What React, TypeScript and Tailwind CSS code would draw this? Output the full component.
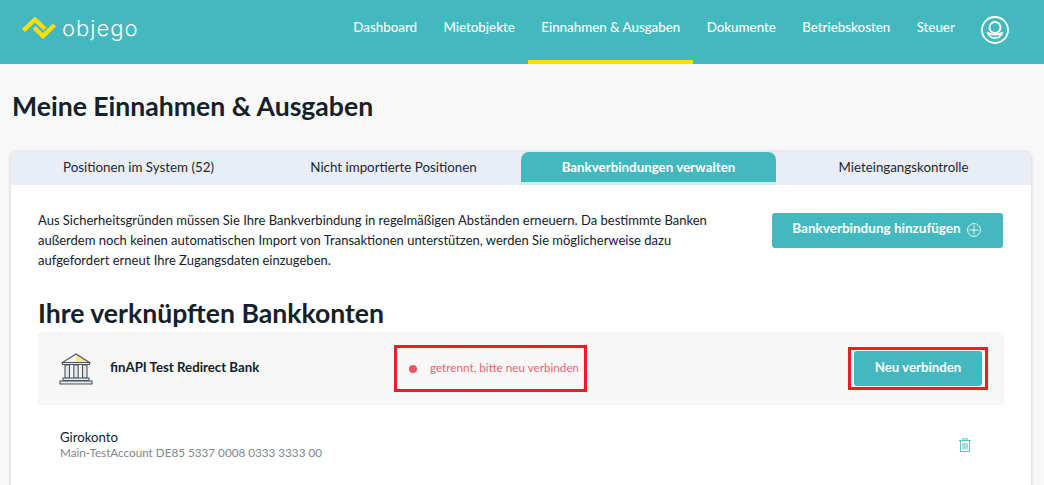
const navItems = ['Dashboard', 'Mietobjekte', 'Einnahmen & Ausgaben', 'Dokumente', 'Betriebskosten', 'Steuer'];
const tabs = ['Positionen im System (52)', 'Nicht importierte Positionen', 'Bankverbindungen verwalten', 'Mieteingangskontrolle'];

function Logo() {
  return (
    <svg width="34" height="22" viewBox="0 0 34 22" fill="none" stroke="#ffe000" strokeWidth="4.4" strokeLinejoin="miter">
      <path d="M1.5 13.5 L13 2.5 L23 12" />
      <path d="M12 10.5 L21 19 L32.5 8" />
    </svg>
  );
}

function Avatar() {
  return (
    <svg width="28" height="28" viewBox="0 0 28 28" fill="none" stroke="#fff" strokeWidth="1.8">
      <circle cx="14" cy="14" r="13" />
      <circle cx="14" cy="11.5" r="5.5" />
      <path d="M6.5 16.5c1.5 3.7 4 5.5 7.5 5.5s6-1.8 7.5-5.5c-1.7 1.4-4 2.2-7.5 2.2s-5.8-.8-7.5-2.2z" />
    </svg>
  );
}

function PlusCircle() {
  return (
    <svg width="14" height="14" viewBox="0 0 14 14" fill="none" stroke="#fff" strokeWidth="0.9" className="mt-[3px]">
      <circle cx="7" cy="7" r="6.4" />
      <path d="M7 2.5 V11.5 M2.5 7 H11.5" />
    </svg>
  );
}

function BankIcon() {
  return (
    <svg width="34" height="32" viewBox="0 0 34 32" fill="none" stroke="#4b5563" strokeWidth="1.1">
      <path d="M17 1 L30 9 H17 Z" fill="#fde68a" stroke="none" />
      <path d="M3.5 9.5 L17 1 L30.5 9.5 Z" />
      <path d="M3.5 9.5 H30.5 V11.5 H3.5 Z" fill="#e5e7eb" />
      <path d="M6 12 H10.5 V25 H6 Z M14.8 12 H19.2 V25 H14.8 Z M23.5 12 H28 V25 H23.5 Z" fill="#e5e7eb" />
      <path d="M4 25 H30 V27.5 H4 Z" fill="#e5e7eb" />
      <path d="M1 28 H33 V31 H1 Z" fill="#e5e7eb" />
    </svg>
  );
}

function TrashIcon() {
  return (
    <svg width="12" height="14" viewBox="0 0 12 14" fill="none" stroke="#5fc4c9" strokeWidth="1.1">
      <path d="M0 2.5 H12" />
      <path d="M4 2.5 V.8 H8 V2.5" />
      <path d="M1.5 2.5 V13.5 H10.5 V2.5" />
      <path d="M4 5 V11.5 M6 5 V11.5 M8 5 V11.5" />
    </svg>
  );
}

export default function App() {
  return (
    <div className="h-[485px] overflow-hidden bg-[#f8f8f8] font-['Lato','Noto_Sans',sans-serif] text-[#14202b]">
      {/* header */}
      <header className="flex h-16 items-stretch bg-[#43b9bf] pl-[22px] pr-[35px]">
        <div className="flex items-center gap-[6px] pb-[8px]">
          <Logo />
          <span className="font-['Inter',sans-serif] text-[22px] font-light leading-none tracking-[1px] text-white">objego</span>
        </div>
        <nav className="ml-auto flex items-stretch">
          {navItems.map((item) => (
            <div
              key={item}
              className={`flex items-center border-b-4 px-[13.2px] pb-[4px] text-[13.33px] font-medium text-white ${
                item === 'Einnahmen & Ausgaben' ? 'border-[#ffe000]' : 'border-transparent'
              }`}
            >
              {item}
            </div>
          ))}
        </nav>
        <div className="ml-[13px] flex items-center pb-[5px]">
          <Avatar />
        </div>
      </header>

      <main className="pl-[11px] pr-[13px]">
        <h1 className="pl-px pt-[26px] text-[26.6px] font-bold leading-[32px] text-[#14202b]">Meine Einnahmen &amp; Ausgaben</h1>

        {/* card */}
        <section className="mt-[30px] rounded-t-md bg-white shadow-[0_0_4px_rgba(0,0,0,0.18)]">
          <div className="grid h-[33px] grid-cols-4 rounded-t-md bg-[#e9edf5]">
            {tabs.map((tab) =>
              tab === 'Bankverbindungen verwalten' ? (
                <div key={tab} className="flex h-[33px] items-center justify-center rounded-t-lg border-b-[3px] border-[#cdeced] bg-[#43b9bf] pt-[1px] text-[13.33px] font-bold text-white">
                  {tab}
                </div>
              ) : (
                <div key={tab} className="flex items-center justify-center pb-[1px] text-[13.33px] text-[#1d2733]">
                  {tab}
                </div>
              ),
            )}
          </div>

          <div className="pl-[27px] pr-[27px]">
            <div className="flex items-start justify-between pt-[25px]">
              <p className="w-[700px] text-[13px] leading-[20px] text-[#14202b]">
                Aus Sicherheitsgründen müssen Sie Ihre Bankverbindung in regelmäßigen Abständen erneuern. Da bestimmte Banken außerdem noch keinen automatischen Import von Transaktionen unterstützen, werden Sie möglicherweise dazu aufgefordert erneut Ihre Zugangsdaten einzugeben.
              </p>
              <button className="mr-px mt-[3px] flex h-[35px] w-[231px] items-center justify-center gap-[6px] rounded-[3px] bg-[#43b9bf] pb-[4px] pr-[2px] text-[13.5px] font-bold text-white">
                Bankverbindung hinzufügen
                <PlusCircle />
              </button>
            </div>

            <h2 className="mt-[27px] text-[26.6px] font-bold leading-[32px] text-[#14202b]">Ihre verknüpften Bankkonten</h2>

            {/* bank row */}
            <div className="mt-[3px] flex h-[73px] items-center bg-[#f7f7f7] pl-[21px] pr-[16px]">
              <BankIcon />
              <span className="ml-[17px] w-[284px] pb-[1px] text-[13.25px] font-bold">finAPI Test Redirect Bank</span>
              <div className="flex h-[47px] w-[193px] items-center border-[3px] border-[#ee1c25] pl-[12px]">
                <span className="h-[8px] w-[8px] rounded-full bg-[#f2555f]" />
                <span className="ml-[13px] pb-[1px] text-[11.7px] text-[#f2636c]">getrennt, bitte neu verbinden</span>
              </div>
              <div className="ml-auto flex h-[43px] w-[140px] items-center justify-center border-[3px] border-[#ee1c25]">
                <button className="h-[35px] w-[128px] rounded-[3px] bg-[#43b9bf] pb-[1px] text-[13.25px] font-bold text-white">Neu verbinden</button>
              </div>
            </div>

            {/* account row */}
            <div className="flex items-center justify-between pl-[22px] pr-[33px] pt-[24px]">
              <div>
                <div className="text-[13.2px] leading-[16px] text-[#14202b]">Girokonto</div>
                <div className="text-[11.7px] leading-[15px] text-[#7c8790]">Main-TestAccount DE85 5337 0008 0333 3333 00</div>
              </div>
              <TrashIcon />
            </div>
            <div className="h-[40px]" />
          </div>
        </section>
      </main>
    </div>
  );
}
